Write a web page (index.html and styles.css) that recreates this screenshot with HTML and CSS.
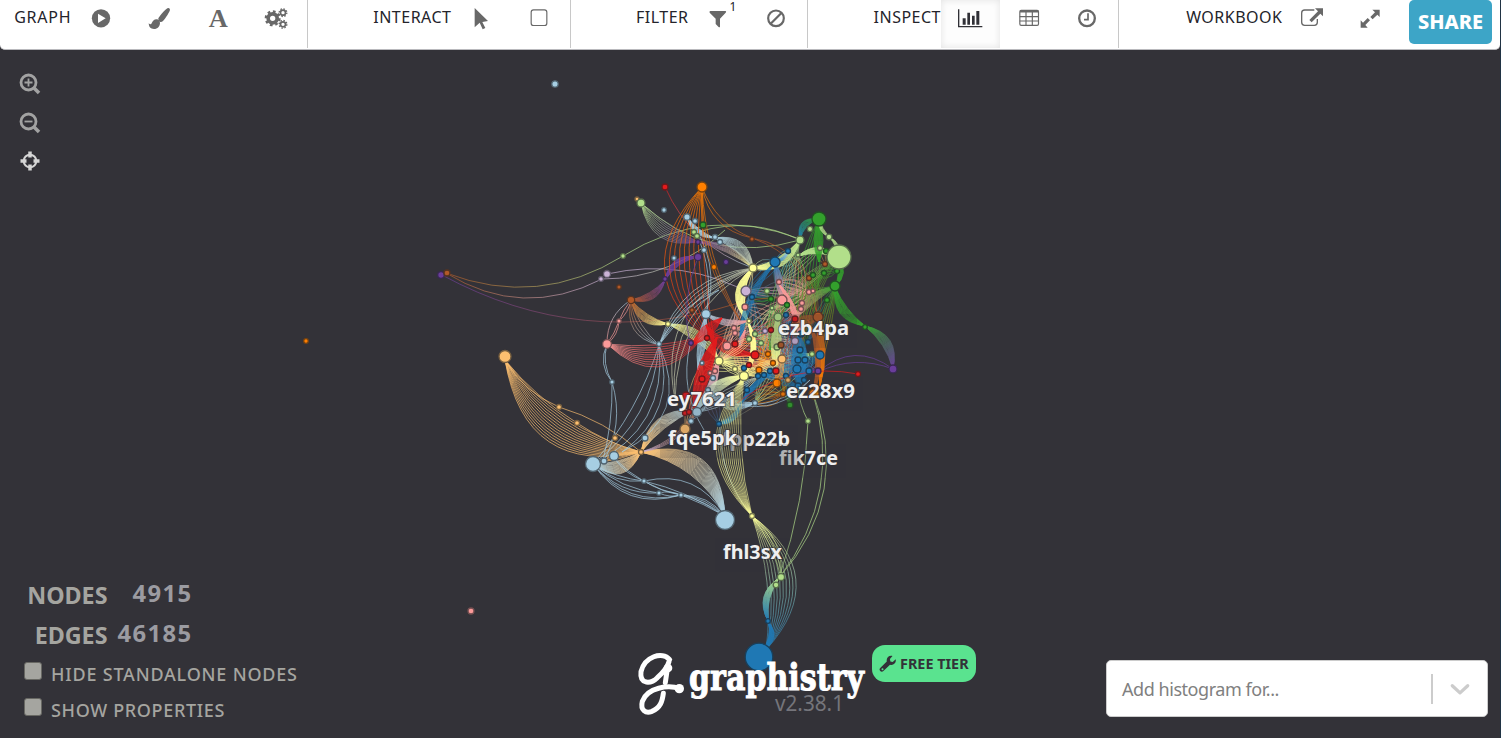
FILE: index.html
```html
<!DOCTYPE html>
<html lang="en">
<head>
<meta charset="utf-8">
<title>Graphistry</title>
<link rel="stylesheet" href="styles.css">
</head>
<body>
<div class="app">
<header class="toolbar">
  <section class="group group-graph"><span class="label">GRAPH</span>
    <button class="tool"><svg viewBox="264 15 78 78"><circle cx="303" cy="55" r="27.500"/><path class="cut" d="M294 41v28l23-14z"/></svg></button>
    <button class="tool"><svg viewBox="439 15 78 78"><path d="M478 52C487 40 496 29 503 25q7-3 8 4c-1 6-12 24-21 34q-4 4-8 3-5-2-6-8-1-3 2-6zM473 58q7 2 8 10c0 10-7 19-18 19-11 0-15-6-16-17 4 3 7 4 9 0 3-7 7-13 17-12z"/></svg></button>
    <button class="tool"><svg viewBox="615 15 78 78"><text class="glyph-a" x="626" y="82" textLength="57" lengthAdjust="spacingAndGlyphs">A</text></svg></button>
    <button class="tool"><svg viewBox="790 15 78 78"><g class="gears"><circle cx="819" cy="55" r="13.500" stroke-width="11"/><circle cx="819" cy="55" r="20.500" stroke-width="7" stroke-dasharray="8.050 8.050"/><circle cx="850" cy="38" r="7.500" stroke-width="5"/><circle cx="850" cy="38" r="11.500" stroke-width="4" stroke-dasharray="4.500 4.500"/><circle cx="850" cy="73" r="7.500" stroke-width="5"/><circle cx="850" cy="73" r="11.500" stroke-width="4" stroke-dasharray="4.500 4.500"/></g></svg></button>
  </section>
  <section class="group group-interact"><span class="label">INTERACT</span>
    <button class="tool"><svg viewBox="322 15 78 78"><path d="M342 24l40 39-17 3 9 18-8 4-9-20-15 14z"/></svg></button>
    <button class="tool"><svg viewBox="500 15 78 78"><rect class="line" x="515.500" y="29.500" width="47" height="47" rx="7" stroke-width="3.500"/></svg></button>
  </section>
  <section class="group group-filter"><span class="label">FILTER</span>
    <button class="tool"><svg viewBox="1036 15 78 78"><path d="M1052 33h46q3 2 0 5l-17 18v24q-1 3-5 0l-8-8V56l-18-18q-2-4 2-5z"/></svg><span class="count">1</span></button>
    <button class="tool"><svg viewBox="1211 15 78 78"><g class="line" stroke-width="6.500"><circle cx="1250" cy="55" r="23.500"/><path d="M1234 71l33-33"/></g></svg></button>
  </section>
  <section class="group group-inspect"><span class="label">INSPECT</span>
    <button class="tool active"><svg viewBox="471 15 78 78"><path d="M474 28h4v50h69v4h-73zM488 55h9v19h-9zM502 38h8v36h-8zM516 47h8v27h-8zM529 33h9v41h-9z"/></svg></button>
    <button class="tool"><svg viewBox="647 15 78 78"><g class="line" stroke-width="3.500"><rect x="658.500" y="31" width="56" height="45" rx="4"/><path d="M658 50h56M658 63h56M677 33v43M696 33v43"/><path stroke-width="7" d="M659 34h55"/></g></svg></button>
    <button class="tool"><svg viewBox="822 15 78 78"><g class="line"><circle cx="861" cy="55" r="23.500" stroke-width="7"/><path stroke-width="5" d="M864 40v19h-12"/></g></svg></button>
  </section>
  <section class="group group-workbook"><span class="label">WORKBOOK</span>
    <button class="tool"><svg viewBox="594 15 78 78"><path class="line" stroke-width="4" d="M640 30h-29q-9 0-9 9v28q0 9 9 9h29q9 0 9-9V57"/><path d="M642 25h24v24l-8-8-26 26-7-7 26-26z"/></svg></button>
    <button class="tool"><svg viewBox="769 15 78 78"><path d="M815 29h22v22l-7-7-14 14-7-7 14-14zM780 61l7 7 14-14 7 7-14 14 7 8h-21z"/></svg></button>
    <button class="share">SHARE</button>
  </section>
</header>
<main class="stage">
  <svg class="graph" id="graph" width="1501" height="738" viewBox="0 0 1501 738"></svg>
  <nav class="zoom-controls">
    <svg viewBox="0 0 24 24"><g class="lens"><circle cx="10.500" cy="10.500" r="7.500"/><path d="M16 16l5 5" stroke-width="3.500"/><path d="M6.500 10.500h8M10.500 6.500v8" stroke-width="1.800"/></g></svg>
    <svg viewBox="0 0 24 24"><g class="lens"><circle cx="10.500" cy="10.500" r="7.500"/><path d="M16 16l5 5" stroke-width="3.500"/><path d="M6.500 10.500h8" stroke-width="1.800"/></g></svg>
    <svg viewBox="0 0 24 24"><g class="cross"><circle cx="12" cy="12" r="6.300" stroke-width="2"/><path d="M12 2.500v6M12 15.500v6M2.500 12h6M15.500 12h6" stroke-width="3.500"/></g></svg>
  </nav>
  <section class="stats">
    <div class="stat"><span class="stat-name">NODES</span><span class="stat-value">4915</span></div>
    <div class="stat"><span class="stat-name">EDGES</span><span class="stat-value">46185</span></div>
    <label class="option hide-option"><i class="box"></i><span>HIDE STANDALONE NODES</span></label>
    <label class="option show-option"><i class="box"></i><span>SHOW PROPERTIES</span></label>
  </section>
  <section class="brand">
    <svg class="logo" width="230" height="66" viewBox="0 0 230 66">
      <g class="mark" transform="translate(-19 -92) scale(.3333)"><path d="M149 299C126 273 74 290 63 335C58 376 94 371 112 353C130 337 143 321 147 305M143 320L136 368"/><path d="M180 386C145 374 82 382 67 424C60 452 78 460 94 455C122 444 127 423 130 400"/><circle class="ball" cx="144" cy="324" r="13"/><circle class="ball" cx="178" cy="386" r="14"/></g>
      <text class="wordmark" x="50" y="37.500" textLength="175" lengthAdjust="spacingAndGlyphs">graphistry</text>
      <text class="version" x="136" y="59" textLength="69" lengthAdjust="spacingAndGlyphs">v2.38.1</text>
    </svg>
    <span class="tier"><svg viewBox="0 0 18 18"><path d="M16.700 4.300l-3 2.600-2.300-.5-.5-2.300L13.500 1C10 0 7 3 7.800 6.500L1.200 13c-2 2 1 5 3.200 3.100L11 9.700c3.500 1 6.600-1.800 5.700-5.400z"/><circle class="hole" cx="3.500" cy="14.300" r="1"/></svg><b>FREE TIER</b></span>
  </section>
  <div class="histogram"><span>Add histogram for...</span><i class="divider"></i><svg viewBox="0 0 20 14"><path d="M3 4l7 6.500L17 4"/></svg></div>
</main>
</div>
<script src="graph.js"></script>
</body>
</html>
```
FILE: styles.css
```css
* { box-sizing: border-box; }
body { margin: 0; overflow: hidden; background: #333238; font-family: "Noto Sans", "Open Sans", sans-serif; }
.app { position: relative; width: 1501px; height: 738px; border-right: 1px solid #203344; overflow: hidden; background: #333238; }
.toolbar { position: relative; z-index: 2; display: flex; width: 1500px; height: 50px; background: #fff; border-bottom: 1px solid #b9b9bd; border-radius: 0 0 5px 5px; }
.group { display: flex; justify-content: flex-end; height: 48px; padding-right: 1.500px; border-right: 1px solid #c8c8c8; }
.group-graph { width: 308px; }
.group-interact { width: 263px; }
.group-filter { width: 237px; }
.group-inspect { width: 311px; }
.group-workbook { width: 381px; border: 0; padding-right: 8px; }
.label { padding-top: 5px; font-size: 16px; line-height: 24px; letter-spacing: .5px; color: #24242b; white-space: nowrap; }
.group-graph .label { letter-spacing: .8px; }
.tool { position: relative; display: flex; justify-content: center; align-items: flex-start; flex: none; width: 58.5px; height: 48px; padding: 5px 0 0; border: 0; background: none; font: inherit; }
.tool svg { display: block; width: 26px; height: 26px; fill: #686868; overflow: visible; }
.tool.active { background: #fdfdfd; box-shadow: inset 0 0 7px #e2e2e2; }
.tool.active svg { fill: #303036; }
.tool .cut { fill: #fff; }
.line, .gears { fill: none; stroke: #686868; }
.tool .line { fill: none; }
.glyph-a { font: bold 78px "Liberation Serif", serif; }
.count { position: absolute; left: 41px; top: 0; font-size: 12px; line-height: 14px; color: #222; }
.share { width: 83px; height: 44px; margin-left: 9.500px; padding: 0; border: 0; border-radius: 5px; background: #3da5c7; color: #fff; font: 800 20px/44px "Noto Sans", sans-serif; }
.stage { position: static; }
.graph { position: absolute; left: 0; top: 0; }
.graph path { fill: none; }
.node-label { font: bold 20px "Noto Sans", sans-serif; fill: #f0f0f0; paint-order: stroke; stroke: #333238; stroke-opacity: .55; stroke-width: 2px; }
.zoom-controls { position: absolute; left: 18px; top: 72px; display: flex; flex-direction: column; gap: 14.500px; }
.zoom-controls svg { display: block; width: 24px; height: 24px; }
.lens { fill: none; stroke: #a2a2a2; stroke-width: 2.8; }
.cross { fill: none; stroke: #d6d6d6; }
.stats { position: absolute; left: 24px; top: 574px; width: 290px; color: #a5a5a0; }
.stat { display: flex; height: 40px; align-items: center; }
.stat-name { width: 83.500px; padding-top: 1px; text-align: right; font-size: 23.300px; font-weight: 700; }
.stat-value { width: 85px; padding-bottom: 2px; text-align: right; font-size: 23.800px; font-weight: 700; letter-spacing: 1.4px; color: #9b9ba1; }
.option { display: flex; gap: 9px; height: 36px; align-items: center; font-size: 18px; font-weight: 500; letter-spacing: .8px; white-space: nowrap; }
.hide-option { padding-top: 4px; }
.show-option { padding-top: 4px; letter-spacing: .65px; }
.box { width: 18px; height: 18px; margin-bottom: 6px; border-radius: 3px; background: #a5a5a0; border: 1px solid #686863; }
.brand { position: absolute; left: 639px; top: 645px; display: flex; align-items: flex-start; gap: 3px; }
.logo { margin-top: 7px; overflow: visible; }
.mark { fill: none; stroke: #fff; stroke-width: 15; stroke-linecap: round; stroke-linejoin: round; }
.ball { fill: #fff; stroke: none; }
.wordmark { font: bold 37px "DejaVu Serif", serif; fill: #fff; stroke: #fff; stroke-width: 1px; }
.version { font: 22px "Noto Sans", sans-serif; fill: #75757b; }
.tier { display: flex; align-items: center; gap: 3px; width: 104px; height: 37px; padding-left: 7px; border-radius: 13px; background: #5ae38f; color: #333238; font-size: 14.400px; line-height: 18px; white-space: nowrap; }
.tier svg { width: 18px; height: 18px; fill: #333238; }
.tier .hole { fill: #5ae38f; }
.histogram { position: absolute; left: 1106px; top: 660px; display: flex; align-items: center; width: 382px; height: 57px; padding: 0 16px 0 15px; border: 1px solid #ccc; border-radius: 5px; background: #fff; color: #808080; font-size: 18px; letter-spacing: -.45px; }
.histogram span { flex: 1; }
.divider { width: 2px; height: 30px; margin-right: 16px; background: #ccc; }
.histogram svg { width: 22px; height: 16px; fill: none; stroke: #ccc; stroke-width: 3; stroke-linecap: round; stroke-linejoin: round; }
```
FILE: graph.js
```js
const C = { lb:'#a6cee3', b:'#1f78b4', lg:'#b2df8a', g:'#33a02c', p:'#fb9a99', r:'#e31a1c', lo:'#fdbf6f', o:'#ff7f00', lp:'#cab2d6', pu:'#6a3d9a', y:'#ffff99', br:'#b15928', w:'#c7ccae' };
const svg = document.getElementById('graph');
const NS = 'http://www.w3.org/2000/svg';
function make(tag, attrs, parent) {
  const el = document.createElementNS(NS, tag);
  for (const k in attrs) el.setAttribute(k, attrs[k]);
  (parent || svg).appendChild(el);
  return el;
}
const defs = make('defs', {});
let gid = 0;
// A bundle of arcs between two points; bend is the offset of each arc's middle from the chord.
function bundle(x1, y1, x2, y2, b0, b1, n, c1, c2, opacity, width) {
  const id = 'e' + gid++;
  const lg = make('linearGradient', { id, gradientUnits:'userSpaceOnUse', x1, y1, x2: x2 + .01, y2: y2 + .01 }, defs);
  make('stop', { offset:0, 'stop-color':C[c1] }, lg);
  make('stop', { offset:1, 'stop-color':C[c2] }, lg);
  const len = Math.hypot(x2-x1, y2-y1) || 1, nx = -(y2-y1)/len, ny = (x2-x1)/len;
  let d = '';
  for (let i = 0; i < n; i++) {
    const b = 2 * (n > 1 ? b0 + (b1-b0)*i/(n-1) : b0);
    d += `M${x1} ${y1}Q${(x1+x2)/2+nx*b} ${(y1+y2)/2+ny*b} ${x2} ${y2}`;
  }
  make('path', { d, stroke:`url(#${id})`, 'stroke-width':width || .8, opacity:opacity || .85 });
}
const core = [
[753,268,4,'y'],[775,262,5,'b'],[788,251,2.5,'b'],[800,240,4,'lg'],[798,255,2,'lg'],[820,248,2.5,'lg'],[826,251,2.5,'g'],[825,264,2.5,'br'],[809,278,2.5,'br'],[813,275,2.5,'g'],[824,273,2.5,'g'],[837,271,2.5,'g'],[835,286,5,'g'],[746,291,5,'lp'],[752,297,2.5,'b'],[745,307,3,'p'],[767,291,2.5,'lg'],[779,282,2.5,'p'],[782,300,5,'p'],[771,299,2.5,'g'],[787,305,2.5,'g'],[772,308,2,'lg'],[809,292,2.5,'p'],[813,291,2,'p'],[802,303,2.5,'p'],[801,309,2.5,'p'],[778,317,4,'lg'],[786,315,2.5,'b'],[795,319,3,'r'],[818,317,5,'br'],[827,300,2.5,'g'],[706,314,4.5,'lb'],[749,321,2,'y'],[734,328,2.5,'p'],[735,333,2.5,'p'],[707,338,2.5,'r'],[727,346,4,'p'],[735,344,3,'r'],[749,339,2.5,'lg'],[755,334,2.5,'lg'],[765,331,2.5,'lp'],[771,330,2.5,'r'],[761,343,2.5,'lg'],[755,355,4,'r'],[768,354,2.5,'o'],[777,347,3,'lg'],[781,345,3,'br'],[795,341,3.5,'lp'],[801,334,3,'b'],[808,342,2.5,'b'],[800,350,3,'b'],[812,354,2.5,'lg'],[820,355,4,'b'],[805,360,3,'b'],[798,360,3,'b'],[782,359,4,'lo'],[773,363,2.5,'o'],[719,361,4,'y'],[735,369,2.5,'y'],[744,376,4.5,'y'],[744,368,2.5,'b'],[749,365,2.5,'r'],[759,370,3,'o'],[758,376,2.5,'b'],[764,375,2.5,'b'],[770,371,2.5,'b'],[776,371,3,'r'],[777,383,4,'o'],[786,376,2.5,'b'],[797,369,4,'b'],[809,371,3,'b'],[818,371,3,'pu'],[798,386,3,'b'],[804,380,2.5,'b'],[788,380,2.5,'lo'],[783,394,2.5,'o'],[814,394,5,'o'],[702,379,3,'r'],[710,373,2,'p'],[715,371,2.5,'p'],[702,363,2,'lb'],[713,378,2.5,'lb'],[708,390,2.5,'lb'],[686,396,4,'r'],[747,390,2.5,'b'],[755,403,2.5,'lb'],[790,405,3,'g'],[685,413,2.5,'r'],[689,412,2.5,'r'],[697,412,4.5,'lb'],[691,421,2.5,'lb'],[685,429,5,'lo'],[719,424,2.5,'b']];
let seed = 91;
function rnd() { seed = (seed * 16807) % 2147483647; return seed / 2147483647; }

// fine mesh inside the dense centre
for (let i = 0; i < 200; i++) {
  const a = core[Math.floor(rnd()*core.length)], b = core[Math.floor(rnd()*core.length)];
  if (Math.hypot(a[0]-b[0], a[1]-b[1]) < 80) {
    const hue = a[3] === 'lb' || a[3] === 'lp' ? b[3] : a[3];
    bundle(a[0], a[1], b[0], b[1], -8+rnd()*4, 4+rnd()*4, 4, hue, b[3] === 'lb' ? hue : b[3], .7);
  }
}

[
// long outer strands
[446,273,623,256,22,22,1,'br','lg'],[623,256,800,239,-22,-22,1,'lg','lg'],[446,273,602,279,22,22,1,'br','lp'],[602,279,725,230,13,13,1,'lp','lg'],[442,275,735,304,31,31,1,'pu','br'],[607,274,753,295,-14,-14,1,'lp','lp'],[735,304,782,298,-2,-2,1,'br','br'],
[641,203,800,240,23,23,1,'lg','lg'],[698,232,800,240,-10,-10,1,'lg','lg'],[665,187,753,268,13,13,1,'r','lb'],
// left clusters
[505,360,641,452,14,43,13,'lo','lo'],[505,360,559,407,6,6,1,'lo','lo'],[559,407,641,452,-5,-5,1,'lo','lo'],[505,360,577,423,4,4,1,'lo','lo'],[577,423,641,452,3,3,1,'lo','lo'],
[593,464,641,452,3,16,18,'lb','lo',.9],[598,463,641,452,-4,1,5,'lo','lo'],[641,452,725,516,-12,-31,22,'lo','lb',.9],[641,452,694,410,-4,-15,18,'lo','lb',.9],[641,452,701,400,9,13,4,'lp','br'],
[593,464,644,481,3,6,2,'lb','lb'],[593,464,659,493,6,9,2,'lb','lb'],[593,464,681,495,15,17,2,'lb','lb'],[614,458,644,481,3,3,1,'lb','lb'],[614,458,681,495,6,6,1,'lb','lb'],[644,481,725,516,-16,-4,2,'lb','lb'],[644,481,681,495,2,2,1,'lb','lb'],[659,493,681,495,-2,2,2,'lb','lb'],[681,495,725,516,-6,-1,4,'lb','lb'],
[659,345,593,464,-24,-7,3,'lb','lb'],[659,345,622,452,-20,-27,2,'lb','lb'],[607,344,612,382,4,6,2,'lb','lb'],[612,382,602,464,-3,-9,2,'lb','lb'],
[631,300,607,344,7,7,1,'lb','p'],[631,300,619,321,-2,1,2,'p','p'],[619,321,607,344,-1,-3,2,'p','p'],[631,300,659,345,4,13,4,'br','lb'],
[607,344,704,336,5,27,10,'p','r'],[631,300,668,324,3,11,11,'br','y'],[668,324,719,360,-2,-12,9,'y','y'],[631,300,665,280,3,10,10,'br','pu'],[665,280,698,257,-4,-10,14,'pu','pu'],
[641,203,698,242,2,17,9,'lg','pu'],[698,242,753,268,-3,-9,7,'pu','y'],[687,217,714,238,2,7,12,'lb','lb'],[714,238,753,268,-3,-13,12,'lb','w'],[687,217,706,314,-10,-13,2,'lb','lb'],
[702,187,715,345,4,44,9,'o','r'],[702,187,740,320,8,13,3,'o','br'],[702,187,752,238,8,12,2,'o','br'],[752,238,817,315,-15,-20,2,'br','br'],
[659,345,753,268,-10,-20,4,'lb','w'],[659,345,719,290,-4,-8,2,'lb','lb'],[675,400,753,268,-22,-34,3,'w','w'],
[698,257,690,345,7,7,1,'pu','pu'],[690,345,704,430,9,9,1,'lb','lb'],
// yellow, blue and green spine
[819,219,800,360,-8,14,7,'g','g',.8],[839,257,800,350,4,20,9,'g','br',.8],[835,287,818,371,-4,8,6,'g','o',.8],[839,257,782,300,-4,6,8,'g','p',.75],[800,240,770,350,-4,12,7,'lg','g',.7],
[753,268,748,322,6,15,20,'y','y',.95],[748,322,744,376,-5,-10,18,'y','y',.95],[753,268,800,240,4,13,17,'y','lg',.9],[798,256,838,257,-3,-9,16,'lg','lg',.95],[800,240,819,219,-4,-10,12,'b','g',.9],
[819,219,819,262,-4,5,14,'g','g'],[819,219,829,237,1,4,7,'lg','lg'],[829,237,838,257,-2,-5,7,'lg','lg'],[838,257,835,287,-2,-7,12,'g','g'],[835,287,865,326,3,12,15,'g','g'],[865,326,893,369,-4,-13,18,'g','pu'],[893,369,818,372,8,15,2,'pu','pu'],
[775,262,740,345,5,11,8,'b','b'],[775,262,788,251,1,4,8,'b','lb'],[775,262,782,300,-4,3,14,'b','p'],[778,283,800,350,-4,-9,13,'p','p'],[835,287,795,319,1,9,12,'g','p'],[778,315,776,371,-4,6,20,'lg','y',.75],
[706,314,748,321,2,8,9,'lb','p'],[706,314,698,370,-4,4,9,'lb','lb'],[719,361,745,330,2,8,9,'p','p'],
[717,337,694,410,-5,9,24,'r','r'],[692,345,722,318,-6,5,14,'r','r'],[706,325,755,355,3,14,12,'r','r'],[718,357,695,410,-9,-2,18,'p','lb'],[744,376,697,410,2,12,20,'y','lb',.85],[708,390,755,403,3,13,9,'lb','lb'],
[719,361,755,336,-5,5,6,'y','lo'],[719,361,773,363,-6,8,7,'y','lo'],[719,361,744,376,-5,4,5,'y','y'],[744,376,782,359,-5,5,7,'y','lo'],
[775,370,740,405,1,6,12,'b','b'],[740,405,719,424,-2,-7,9,'b','b'],[799,334,800,386,-8,8,22,'b','b',.85],[820,355,797,369,-5,5,9,'b','b'],[797,369,770,371,-4,6,9,'b','b'],[797,386,764,375,-4,5,7,'b','b'],[818,317,820,386,-6,2,18,'br','o',.9],[808,320,813,394,-10,-5,10,'br','br'],[782,359,777,383,-4,4,7,'lo','o'],[790,325,818,317,-5,6,12,'br','br'],
[858,374,737,403,14,14,1,'r','r'],[735,404,810,380,9,12,2,'lb','lb'],[698,412,758,377,-5,7,5,'lb','w'],
[744,376,752,516,7,32,13,'y','y',.75],[720,424,752,516,9,9,1,'lb','y'],[752,516,766,650,-8,-37,10,'y','b'],[752,516,781,578,-4,-10,3,'y','lg'],[779,578,768,621,4,10,19,'lg','b',.9],[768,621,762,650,-4,-9,14,'b','b'],
[808,421,779,578,-6,-6,1,'lg','lg'],[812,390,779,578,-25,-29,2,'lg','lg'],[798,386,808,421,2,2,1,'lg','lg']
].forEach(a => bundle(...a));

const outer = [[555,84,3.2,'lb'],[306,341,2.3,'o'],[471,611,3,'p'],[441,275,3.3,'pu'],[447,273,3,'br'],[665,187,3,'r'],[702,187,5,'o'],[637,199,2,'lo'],[641,203,4,'lg'],[664,210,2.3,'lb'],[687,217,3.2,'lb'],[695,221,2.5,'lb'],[703,225,3,'g'],[694,232,2.5,'lg'],[697,236,2.5,'lg'],[715,237,2.5,'lb'],[720,242,2.5,'lb'],[698,242,2.3,'pu'],[704,250,2.5,'lb'],[698,257,3.7,'pu'],[726,262,2.6,'pu'],[714,267,2.6,'o'],[674,258,2.2,'lb'],[665,279,2.3,'pu'],[623,256,2.3,'lg'],[607,274,3.5,'lp'],[601,279,2.4,'lp'],[619,287,2.2,'br'],[631,300,3.7,'br'],[619,321,2.2,'p'],[607,344,4.4,'p'],[668,324,2.4,'y'],[659,344,2.4,'lb'],[691,343,2.3,'pu'],[692,310,2.2,'br'],[752,239,2.2,'br'],[810,229,2.6,'lg'],[829,237,2.8,'lg'],[819,219,7,'g'],[839,257,12,'lg'],[865,327,2.3,'g'],[893,369,4,'pu'],[858,374,2.5,'r'],[505,356.5,6,'lo'],[559,407,2.5,'lo'],[577,423,2.5,'lo'],[615,438,2.5,'lo'],[641,452,2.5,'lo'],[593,464,7.5,'lb'],[604,461,3,'lb'],[614,456,4.5,'lb'],[645,438,3,'lb'],[612,382,2.2,'lb'],[644,481,2.2,'lb'],[659,493,2.2,'lb'],[681,495,2.2,'lb'],[725,520,9.5,'lb'],[752,516,2.5,'y'],[808,421,2.5,'lg'],[781,577,3.5,'lg'],[776,585,2.8,'lg'],[768,621,2.3,'b'],[759,657,13.8,'b']];
core.concat(outer).forEach(([cx, cy, r, c]) => {
  const dot = make('circle', { cx, cy, r, fill:C[c], 'stroke-width':1.3 });
  dot.style.stroke = `color-mix(in srgb, ${C[c]} 42%, #14181c)`;
});

const fade = make('linearGradient', { id:'fade' }, defs);
make('stop', { offset:.2, 'stop-color':'#b0b0b2' }, fade);
make('stop', { offset:.5, 'stop-color':'#f0f0f0' }, fade);
[['fpp22b',722,446,68,1],['fqe5pk',668,445,69],['ey7621',667,406,70],['ezb4pa',778,335,71],['ez28x9',786,398,69],['fik7ce',779,465,59,1],['fhl3sx',723,559,59]].forEach(([t, x, y, w, dim]) => {
  make('rect', { x:x-8, y:y-21, width:w+16, height:34, fill:'#333236', opacity:.16 });
  const el = make('text', { class:'node-label', x, y, textLength:w, lengthAdjust:'spacingAndGlyphs' });
  if (dim) el.style.fill = 'url(#fade)';
  el.textContent = t;
});
```
